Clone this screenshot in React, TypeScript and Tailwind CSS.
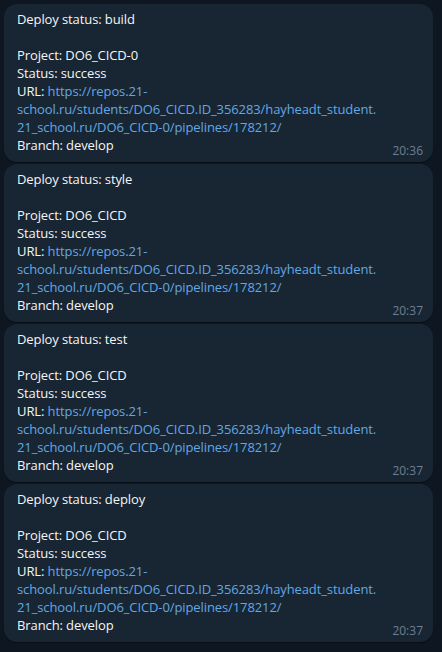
const messages = [
  { stage: 'build', project: 'DO6_CICD-0', time: '20:36' },
  { stage: 'style', project: 'DO6_CICD', time: '20:37' },
  { stage: 'test', project: 'DO6_CICD', time: '20:37' },
  { stage: 'deploy', project: 'DO6_CICD', time: '20:37' },
];

function Bubble({ stage, project, time }: { stage: string; project: string; time: string }) {
  return (
    <div className="relative ml-[4px] w-[429px] rounded-[13px] bg-[#182533] pl-[13px] pr-[13px] pt-[6px] pb-[8px] text-[13px] leading-[18px] tracking-[-0.1px] text-[#f5f5f5] shadow-[0_1px_1px_rgba(0,0,0,0.35)]">
      <div>Deploy status: {stage}</div>
      <div>&nbsp;</div>
      <div>Project: {project}</div>
      <div>Status: success</div>
      <div>
        URL: <span className="text-[#62a8e4]">https://repos.21-</span>
      </div>
      <div className="text-[#62a8e4]">school.ru/students/DO6_CICD.ID_356283/hayheadt_student.</div>
      <div className="text-[#62a8e4]">21_school.ru/DO6_CICD-0/pipelines/178212/</div>
      <div>Branch: develop</div>
      <span className="absolute bottom-[3px] right-[10px] text-[12px] leading-[16px] tracking-normal text-[#6d7f8f]">{time}</span>
    </div>
  );
}

export default function App() {
  return (
    <div
      className="w-[442px] h-[652px] bg-[#0e1621] pt-[4px] flex flex-col gap-[2px] overflow-hidden"
      style={{ fontFamily: '"Open Sans", sans-serif' }}
    >
      {messages.map((m, i) => (
        <Bubble key={i} {...m} />
      ))}
    </div>
  );
}
